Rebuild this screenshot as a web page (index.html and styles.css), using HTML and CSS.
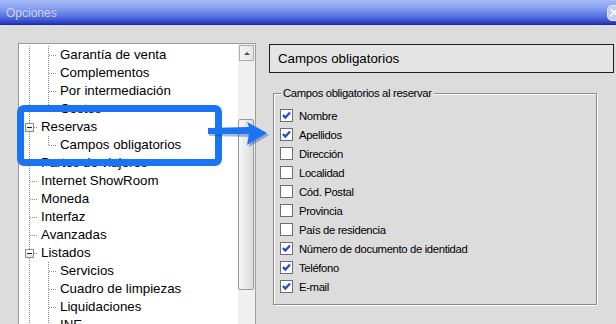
FILE: index.html
```html
<!DOCTYPE html>
<html lang="es">
<head>
  <meta charset="UTF-8">
  <title>Opciones</title>
  <link rel="stylesheet" href="styles.css">
</head>
<body>
  <div class="window">
    <div class="titlebar">
      <span class="title">Opciones</span>
      <span class="close"></span>
    </div>

    <div class="content">
      <div class="tree-panel">
        <ul class="tree">
          <li><span class="g line"></span><span class="g tee"></span><span class="label">Garantía de venta</span></li>
          <li><span class="g line"></span><span class="g tee"></span><span class="label">Complementos</span></li>
          <li><span class="g line"></span><span class="g tee"></span><span class="label">Por intermediación</span></li>
          <li><span class="g line"></span><span class="g elbow"></span><span class="label">Costes</span></li>
          <li><span class="g tee"><span class="expander"></span></span><span class="label">Reservas</span></li>
          <li><span class="g line"></span><span class="g elbow"></span><span class="label">Campos obligatorios</span></li>
          <li><span class="g tee"></span><span class="label">Partes de viajeros</span></li>
          <li><span class="g tee"></span><span class="label">Internet ShowRoom</span></li>
          <li><span class="g tee"></span><span class="label">Moneda</span></li>
          <li><span class="g tee"></span><span class="label">Interfaz</span></li>
          <li><span class="g tee"></span><span class="label">Avanzadas</span></li>
          <li><span class="g tee"><span class="expander"></span></span><span class="label">Listados</span></li>
          <li><span class="g line"></span><span class="g tee"></span><span class="label">Servicios</span></li>
          <li><span class="g line"></span><span class="g tee"></span><span class="label">Cuadro de limpiezas</span></li>
          <li><span class="g line"></span><span class="g tee"></span><span class="label">Liquidaciones</span></li>
          <li><span class="g line"></span><span class="g tee"></span><span class="label">INE</span></li>
        </ul>
        <div class="scrollbar">
          <div class="sb-up"></div>
          <div class="sb-thumb"></div>
        </div>
      </div>

      <div class="settings">
        <div class="page-title">Campos obligatorios</div>
        <fieldset class="group">
          <legend>Campos obligatorios al reservar</legend>
          <div class="check-row"><span class="cb checked"><svg viewBox="0 0 11 11"><path d="M2 5 L4.3 7.6 L9 2.6"/></svg></span>Nombre</div>
          <div class="check-row"><span class="cb checked"><svg viewBox="0 0 11 11"><path d="M2 5 L4.3 7.6 L9 2.6"/></svg></span>Apellidos</div>
          <div class="check-row"><span class="cb"></span>Dirección</div>
          <div class="check-row"><span class="cb"></span>Localidad</div>
          <div class="check-row"><span class="cb"></span>Cód. Postal</div>
          <div class="check-row"><span class="cb"></span>Provincia</div>
          <div class="check-row"><span class="cb"></span>País de residencia</div>
          <div class="check-row"><span class="cb checked"><svg viewBox="0 0 11 11"><path d="M2 5 L4.3 7.6 L9 2.6"/></svg></span>Número de documento de identidad</div>
          <div class="check-row"><span class="cb checked"><svg viewBox="0 0 11 11"><path d="M2 5 L4.3 7.6 L9 2.6"/></svg></span>Teléfono</div>
          <div class="check-row"><span class="cb checked"><svg viewBox="0 0 11 11"><path d="M2 5 L4.3 7.6 L9 2.6"/></svg></span>E-mail</div>
        </fieldset>
      </div>
    </div>

    <!-- annotation drawn over the screenshot -->
    <div class="callout"></div>
    <svg class="callout-arrow" viewBox="200 115 72 35">
      <polygon class="arrow-shadow" points="209,130 250,129 249,124 269,135 249,147 250,137 209,136"/>
      <polygon class="arrow" points="208,128 249,127 247,122 267,133 247,145 249,134 208,134"/>
    </svg>
  </div>
</body>
</html>
```

FILE: styles.css
```css
* { box-sizing: border-box; }

html, body {
  margin: 0;
  height: 100%;
  overflow: hidden;
}
body {
  font-family: "Liberation Sans", Arial, sans-serif;
  background: #dcdcdc;
  color: #000;
}
.window {
  position: relative;
  width: 616px;
  height: 324px;
  overflow: hidden;
}

/* title bar */
.titlebar {
  height: 25px;
  display: flex;
  align-items: center;
  justify-content: space-between;
  padding-left: 6px;
  background: linear-gradient(#a6baf8 0%, #8aa2f0 30%, #5a74e0 65%, #2a3fc4 92%, #16259c 100%);
}
.title {
  font-size: 12px;
  color: #cdd6f5;
}
.close {
  width: 18px;
  height: 16px;
  margin-right: -9px;
  border-radius: 5px;
  border: 1px solid #e8ecfb;
  background:
    linear-gradient(45deg, transparent 44%, #fff 44% 58%, transparent 58%) 2px 3px / 8px 8px no-repeat,
    linear-gradient(-45deg, transparent 44%, #fff 44% 58%, transparent 58%) 2px 3px / 8px 8px no-repeat,
    #c3ccf2;
}

.content {
  display: flex;
  gap: 13px;
  padding: 18px 0 0 18px;
}

/* tree view */
.tree-panel {
  width: 238px;
  height: 300px;
  flex: none;
  display: flex;
  background: #fff;
  border: 1px solid #9c9c9c;
}
.tree {
  flex: 1;
  list-style: none;
  margin: 0;
  padding: 2px 0 0 0;
  font-size: 13.3px;
}
.tree li {
  display: flex;
  height: 18px;
  line-height: 18px;
  white-space: nowrap;
}
.label { padding-left: 3px; }

.g {
  width: 19px;
  flex: none;
  display: flex;
  align-items: center;
}
.g.line {
  background: repeating-linear-gradient(#8c8c8c 0 1px, transparent 1px 2px) 10px 0 / 1px 100% no-repeat;
}
.g.tee {
  background:
    repeating-linear-gradient(#8c8c8c 0 1px, transparent 1px 2px) 10px 0 / 1px 100% no-repeat,
    repeating-linear-gradient(90deg, #8c8c8c 0 1px, transparent 1px 2px) 11px 9px / 8px 1px no-repeat;
}
.g.elbow {
  background:
    repeating-linear-gradient(#8c8c8c 0 1px, transparent 1px 2px) 10px 0 / 1px 10px no-repeat,
    repeating-linear-gradient(90deg, #8c8c8c 0 1px, transparent 1px 2px) 11px 9px / 8px 1px no-repeat;
}
.expander {
  width: 9px;
  height: 9px;
  margin: 1px 0 0 6px;
  border: 1px solid #8e8e8e;
  background: linear-gradient(#222, #222) center / 5px 1px no-repeat, linear-gradient(#fff, #e6e6e6);
}

.scrollbar {
  width: 17px;
  flex: none;
  background: #f0f0f0;
  padding: 1px 0 0 1px;
}
.sb-up {
  width: 15px;
  height: 16px;
  border: 1px solid #acacac;
  background: linear-gradient(90deg, #f4f4f4, #e4e4e4);
  display: flex;
  align-items: center;
  justify-content: center;
}
.sb-up::before {
  content: "";
  border-left: 3px solid transparent;
  border-right: 3px solid transparent;
  border-bottom: 3px solid #555;
}
.sb-thumb {
  width: 16px;
  height: 171px;
  margin: 58px 0 0 -1px;
  border: 1px solid #999;
  border-radius: 2px;
  background: linear-gradient(90deg, #f6f6f6, #e6e6e6 60%, #dcdcdc);
}

/* right side page */
.settings {
  width: 345px;
  padding-top: 1px;
}
.page-title {
  height: 29px;
  border: 1px solid #1e1e1e;
  background: #e4e4e4;
  font-size: 13.3px;
  line-height: 27px;
  padding-left: 8px;
}
.group {
  width: 324px;
  margin: 13px 0 0 4px;
  padding: 6px 6px 8px 6px;
  border: 1px solid #8a8a8a;
  box-shadow: inset 1px 1px 0 #fff, 1px 1px 0 #fff;
  font-size: 11.3px;
  letter-spacing: -0.35px;
}
.group legend {
  padding: 0 2px;
  margin-left: 1px;
  line-height: 14px;
  background: #dcdcdc;
}
.check-row {
  display: flex;
  align-items: center;
  gap: 6px;
  height: 19px;
  white-space: nowrap;
}
.cb {
  width: 13px;
  height: 13px;
  flex: none;
  border: 1px solid #6e6e6e;
  background: #fff;
}
.cb svg {
  display: block;
  width: 11px;
  height: 11px;
}
.cb path {
  fill: none;
  stroke: #1e44d8;
  stroke-width: 2.2;
}

/* annotation */
.callout {
  position: absolute;
  left: 17px;
  top: 105px;
  width: 205px;
  height: 61px;
  border: 7px solid #1b74f2;
  border-radius: 7px;
}
.callout-arrow {
  position: absolute;
  left: 200px;
  top: 115px;
  width: 72px;
  height: 35px;
}
.arrow { fill: #1b74f2; }
.arrow-shadow { fill: rgba(10, 60, 160, 0.35); }
```
